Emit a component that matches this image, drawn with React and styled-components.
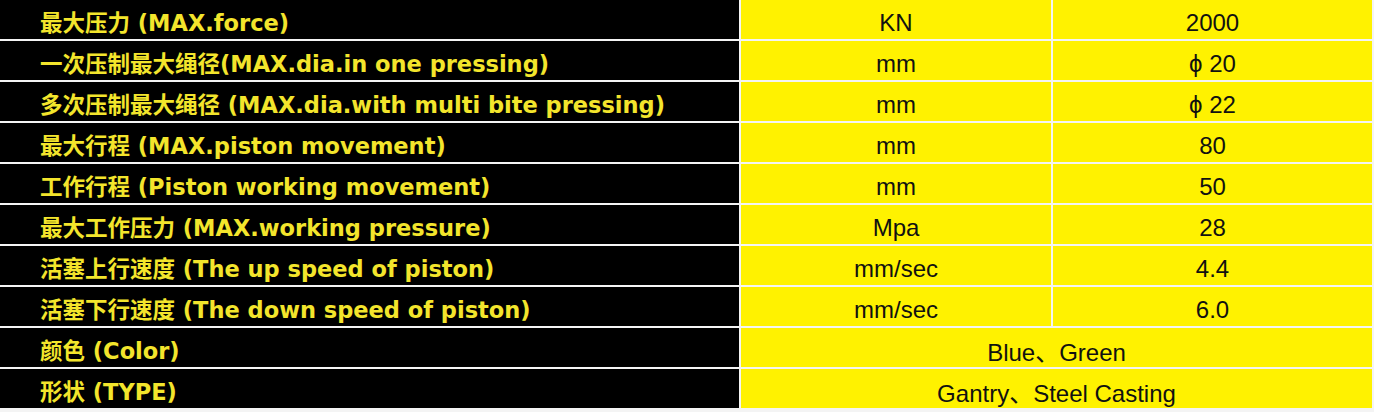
import React from "react";
import styled, { createGlobalStyle } from "styled-components";

const Global = createGlobalStyle`
  body {
    margin: 0;
    background: #f4f4f4;
  }
`;

const Table = styled.div`
  width: 1372px;
  display: grid;
  grid-template-columns: 739px 310px 1fr;
  grid-auto-rows: 39px;
  gap: 2px;
  background: #f4f4f4;
`;

const Label = styled.div`
  background: #000;
  color: #f3e52c;
  font-family: "DejaVu Sans", "Noto Sans CJK SC", sans-serif;
  font-weight: 700;
  font-size: 22.5px;
  display: flex;
  align-items: center;
  padding: 2px 0 0 40px;
  white-space: nowrap;
`;

const Cell = styled.div`
  background: #fff200;
  color: #111;
  font-family: "Liberation Sans", "Noto Sans CJK SC", sans-serif;
  font-size: 24px;
  display: flex;
  align-items: center;
  justify-content: center;
  padding-top: 6px;
  grid-column: ${(p) => (p.$wide ? "span 2" : "auto")};
`;

const rows = [
  ["最大压力 (MAX.force)", "KN", "2000"],
  ["一次压制最大绳径(MAX.dia.in one pressing)", "mm", "ϕ 20"],
  ["多次压制最大绳径 (MAX.dia.with multi bite pressing)", "mm", "ϕ 22"],
  ["最大行程 (MAX.piston movement)", "mm", "80"],
  ["工作行程 (Piston working movement)", "mm", "50"],
  ["最大工作压力 (MAX.working pressure)", "Mpa", "28"],
  ["活塞上行速度 (The up speed of piston)", "mm/sec", "4.4"],
  ["活塞下行速度 (The down speed of piston)", "mm/sec", "6.0"],
  ["颜色 (Color)", "Blue、Green"],
  ["形状 (TYPE)", "Gantry、Steel Casting"],
];

export default function App() {
  return (
    <>
      <Global />
      <Table>
        {rows.map((r, i) => (
          <React.Fragment key={i}>
            <Label>{r[0]}</Label>
            {r.length === 3 ? (
              <>
                <Cell>{r[1]}</Cell>
                <Cell>{r[2]}</Cell>
              </>
            ) : (
              <Cell $wide>{r[1]}</Cell>
            )}
          </React.Fragment>
        ))}
      </Table>
    </>
  );
}
